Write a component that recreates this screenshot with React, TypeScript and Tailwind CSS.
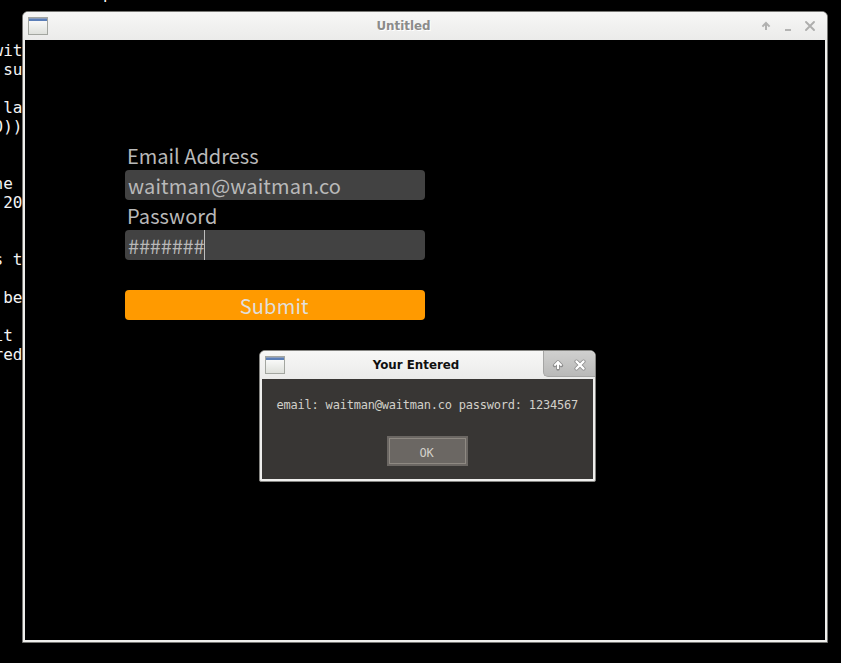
import type { ReactNode } from 'react';

const terminalLines = [
  'wit', ' su', '', ' la', '0))', '', '', 'ne ', ' 20', '', '', 's t', '', ' be', '', 'it ', 'red',
];

function WindowIcon() {
  return (
    <span className="block h-[18px] w-5 shrink-0 border border-[#a3a6a0] bg-linear-to-b from-white to-[#dfe1dc]">
      <span className="block h-[3px] border-t border-[#8c9dbb] bg-[#5b7fb8]" />
    </span>
  );
}

function ArrowUp({ active = false }: { active?: boolean }) {
  return (
    <svg className="block size-3" viewBox="0 0 12 12" fill="none">
      {active && (
        <path d="M6 10V4M2.6 6.4 6 3 9.4 6.4" stroke="#8b8b8b" strokeWidth="3.6" strokeLinecap="round" strokeLinejoin="round" />
      )}
      <path
        d="M6 10V3.4M2.4 6.6 6 3 9.6 6.6"
        stroke={active ? '#ffffff' : '#b1b1b0'}
        strokeWidth="2"
      />
    </svg>
  );
}

function Cross({ active = false }: { active?: boolean }) {
  return (
    <svg className="block size-3" viewBox="0 0 12 12" fill="none" strokeLinecap="round">
      {active && <path d="m2.4 2.4 7.2 7.2m0-7.2L2.4 9.6" stroke="#8b8b8b" strokeWidth="3.8" />}
      <path
        d={active ? 'm2.4 2.4 7.2 7.2m0-7.2L2.4 9.6' : 'm2 2 8 8m0-8-8 8'}
        stroke={active ? '#ffffff' : '#aeaead'}
        strokeWidth={active ? 2.2 : 1.9}
      />
    </svg>
  );
}

function Field({ children }: { children: ReactNode }) {
  return (
    <div className="flex h-[30px] w-[300px] items-center rounded-[4px] bg-[#424242] pl-[3px]">{children}</div>
  );
}

export default function App() {
  return (
    <div className="relative h-[663px] w-[841px] overflow-hidden bg-black">
      <div className="absolute -top-[16px] left-[103px] font-['DejaVu_Sans_Mono',monospace] text-base leading-[19px] text-white">
        p
      </div>
      <pre className="absolute top-[41px] -left-[6.5px] font-['DejaVu_Sans_Mono',monospace] text-base leading-[19px] text-[#f4f4f4]">
        {terminalLines.join('\n')}
      </pre>

      <section className="absolute top-[11px] left-[22px] flex h-[632px] w-[806px] flex-col rounded-t-[6px] border border-[#777774] bg-[#efefed]">
        <header className="flex h-7 shrink-0 items-center rounded-t-[5px] bg-linear-to-b from-[#f7f7f6] to-[#ebebea] pr-[11px] pl-[5px]">
          <WindowIcon />
          <h1 className="-ml-[1px] flex-1 pt-[1px] text-center font-['DejaVu_Sans',sans-serif] text-[11.9px] font-bold text-[#8b8b8a] [text-shadow:1px_1px_0_#fff]">
            Untitled
          </h1>
          <div className="flex items-center gap-2.5">
            <ArrowUp />
            <span className="flex size-3 items-end justify-center pb-[1px]">
              <span className="h-0.5 w-1.5 bg-[#b4b4b3]" />
            </span>
            <Cross />
          </div>
        </header>
        <main className="mx-0.5 h-[600px] bg-black pt-[100px] pl-[100px] font-['Noto_Sans_CJK_SC',sans-serif] text-[20px] leading-[30px] text-[#b9b9b9]">
          <div className="h-[30px] pt-px pl-0.5">Email Address</div>
          <Field>
            <span className="pt-px tracking-[0.16px]">waitman@waitman.co</span>
          </Field>
          <div className="h-[30px] pt-px pl-0.5 tracking-[0.1px]">Password</div>
          <Field>
            <span className="w-[76px] pt-px whitespace-nowrap tracking-[-0.18px]">#######</span>
            <span className="h-[30px] w-px bg-[#bdbdbd]" />
          </Field>
          <button className="mt-[30px] flex h-[30px] w-[300px] items-center justify-center rounded-[4px] bg-[#ff9a00] text-[#e1dfdb]">
            <span className="pt-px pr-[1.5px] tracking-[0.2px]">Submit</span>
          </button>
        </main>
      </section>

      <section className="absolute top-[350px] left-[259px] flex h-[132px] w-[337px] flex-col rounded-t-[6px] rounded-b-[2px] border border-[#858582] bg-[#efefed]">
        <header className="flex h-7 shrink-0 rounded-t-[5px] bg-linear-to-b from-[#f7f7f6] to-[#ebebea] pl-[5px]">
          <div className="pt-[5px]">
            <WindowIcon />
          </div>
          <h2 className="flex-1 pl-[4px] text-center font-['DejaVu_Sans',sans-serif] text-[11.85px] leading-7 font-bold text-[#101010]">
            Your Entered
          </h2>
          <div className="flex h-[26px] w-[52px] items-center gap-2.5 rounded-tr-[5px] rounded-bl-[5px] border-b border-l border-[#a5a5a4] bg-linear-to-b from-[#d0d0cf] to-[#b9b9b8] pt-[2px] pl-2">
            <ArrowUp active />
            <Cross active />
          </div>
        </header>
        <div className="mx-0.5 flex h-[100px] flex-col items-center bg-[#383634] pt-[17px] font-['DejaVu_Sans_Mono',monospace] text-[12px] leading-[18px] tracking-[-0.216px] text-[#d2d0c9]">
          <p className="pr-[0.5px] whitespace-nowrap">email: waitman@waitman.co password: 1234567</p>
          <button className="mt-[22px] flex h-[30px] w-[81px] items-center justify-center border-2 border-[#6b6763] bg-[#6b6763] text-[#d2d0c9]">
            <span className="flex h-full w-full items-center justify-center border border-[#8e8982] pt-1 pr-[2px]">OK</span>
          </button>
        </div>
      </section>
    </div>
  );
}
